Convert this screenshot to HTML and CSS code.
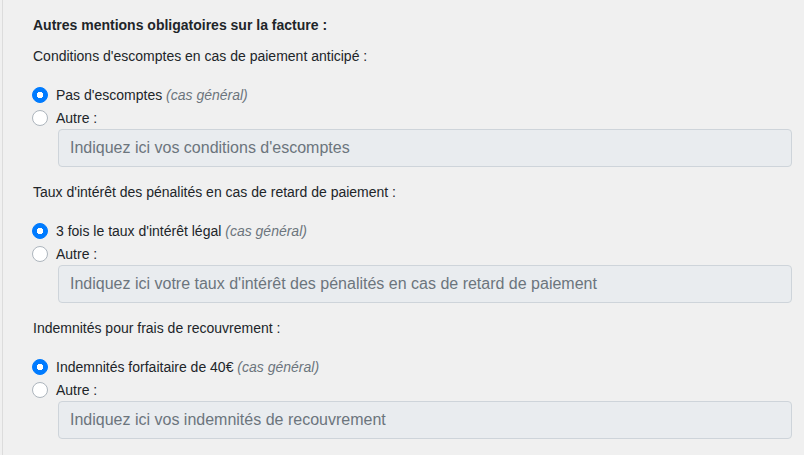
FILE: index.html
```html
<!DOCTYPE html>
<html lang="fr">
  <head>
    <meta charset="UTF-8" />
    <title>Mentions obligatoires</title>
    <link rel="stylesheet" href="styles.css">
  </head>
  <body>
    <div class="panel">
      <h4>Autres mentions obligatoires sur la facture :</h4>

      <div class="group">
        <p class="label">Conditions d'escomptes en cas de paiement anticipé :</p>
        <label class="choice">
          <input type="radio" name="escompte" checked />
          <span>Pas d'escomptes <em>(cas général)</em></span>
        </label>
        <label class="choice">
          <input type="radio" name="escompte" />
          <span>Autre :</span>
        </label>
        <input class="field" type="text" disabled placeholder="Indiquez ici vos conditions d'escomptes" />
      </div>

      <div class="group">
        <p class="label">Taux d'intérêt des pénalités en cas de retard de paiement :</p>
        <label class="choice">
          <input type="radio" name="taux" checked />
          <span>3 fois le taux d'intérêt légal <em>(cas général)</em></span>
        </label>
        <label class="choice">
          <input type="radio" name="taux" />
          <span>Autre :</span>
        </label>
        <input class="field" type="text" disabled placeholder="Indiquez ici votre taux d'intérêt des pénalités en cas de retard de paiement" />
      </div>

      <div class="group">
        <p class="label">Indemnités pour frais de recouvrement :</p>
        <label class="choice">
          <input type="radio" name="indem" checked />
          <span>Indemnités forfaitaire de 40€ <em>(cas général)</em></span>
        </label>
        <label class="choice">
          <input type="radio" name="indem" />
          <span>Autre :</span>
        </label>
        <input class="field" type="text" disabled placeholder="Indiquez ici vos indemnités de recouvrement" />
      </div>
    </div>
  </body>
</html>
```

FILE: styles.css
```css
body {
  margin: 0;
  background: #f0f0f0;
  font-family: "Liberation Sans", Arial, sans-serif;
  font-size: 14px;
  line-height: 21px;
  color: #212529;
}
.panel {
  margin-left: 2px;
  border-left: 1px solid #dcdcdc;
  padding: 15px 12px 20px 30px;
  min-height: 455px;
  box-sizing: border-box;
}
h4 {
  margin: 0 0 10px;
  font-size: 14px;
  font-weight: bold;
}
.group {
  margin-bottom: 15px;
}
.label {
  margin: 0 0 16px;
}
.choice {
  display: flex;
  align-items: center;
  gap: 8px;
  height: 23px;
  margin-left: -1px;
}
.choice span {
  position: relative;
  top: 1px;
}
.choice em {
  color: #6c757d;
}
.choice input {
  appearance: none;
  -webkit-appearance: none;
  margin: 0;
  width: 16px;
  height: 16px;
  border-radius: 50%;
  border: 1px solid #adb5bd;
  background: #fff;
  box-sizing: border-box;
  flex: none;
}
.choice input:checked {
  border-color: #007bff;
  background: #007bff radial-gradient(circle, #fff 0 3px, transparent 3.5px);
}
.field {
  display: block;
  box-sizing: border-box;
  width: calc(100% - 25px);
  margin-left: 25px;
  height: 38px;
  padding: 0 11px;
  border: 1px solid #ced4da;
  border-radius: 4px;
  background: #e9ecef;
  font-family: inherit;
  font-size: 16px;
}
.field::placeholder {
  color: #6c757d;
  opacity: 1;
}
```
